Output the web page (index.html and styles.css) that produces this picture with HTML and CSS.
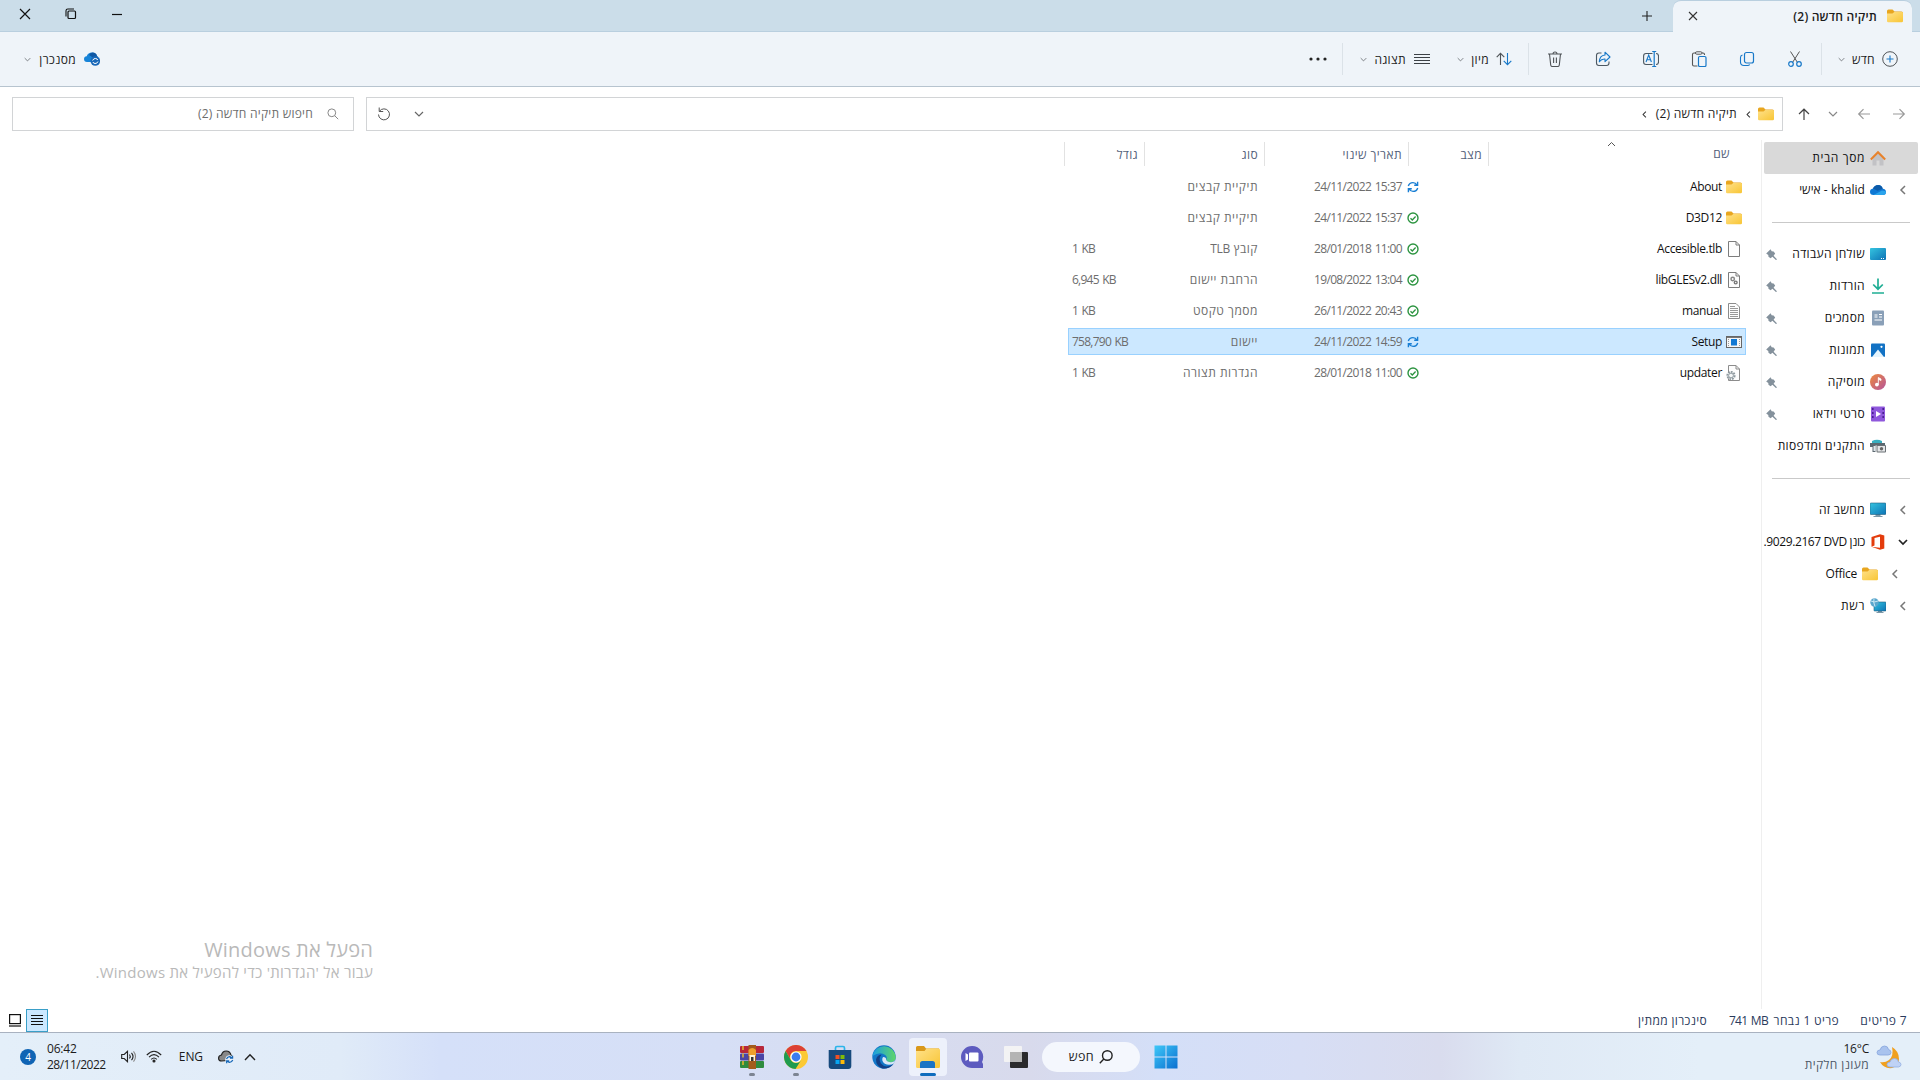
FILE: index.html
```html
<!DOCTYPE html>
<html lang="he" dir="rtl">
<head>
    <meta charset="UTF-8">
    <title>תיקיה חדשה (2)</title>
    <link rel="stylesheet" href="styles.css">
</head>
<body>

<!-- shared icons -->
<svg class="defs" width="0" height="0">
    <defs>
        <linearGradient id="gFolder" x1="0" y1="0" x2="1" y2="1">
            <stop offset="0" stop-color="#ffe18a"/><stop offset="1" stop-color="#f8c534"/>
        </linearGradient>
        <linearGradient id="gScreen" x1="0" y1="0" x2="1" y2="1">
            <stop offset="0" stop-color="#35c4e0"/><stop offset="1" stop-color="#0d73b5"/>
        </linearGradient>
        <linearGradient id="gMusic" x1="0" y1="0" x2="1" y2="1">
            <stop offset="0" stop-color="#ee8a3c"/><stop offset="1" stop-color="#b4549c"/>
        </linearGradient>
        <linearGradient id="gWin" x1="0" y1="0" x2="1" y2="1">
            <stop offset="0" stop-color="#3fc8f8"/><stop offset="1" stop-color="#0a6fd0"/>
        </linearGradient>
        <linearGradient id="gEdge" x1="0" y1="0" x2="1" y2="0">
            <stop offset="0" stop-color="#1b9de2"/><stop offset="1" stop-color="#5fd668"/>
        </linearGradient>
    </defs>
    <symbol id="folder" viewBox="0 0 16 14">
        <path d="M0 2Q0 .5 1.5 .5h4L7.500 2.500H14.500Q16 2.500 16 4V6H0z" fill="#e8a620"/>
        <path d="M0 4.500h5.500L7.300 3H15q1 0 1 1v8q0 1.300-1.300 1.300H1.300Q0 13.300 0 12z" fill="url(#gFolder)"/>
    </symbol>
    <symbol id="pin" viewBox="0 0 12 12">
        <path d="M5 .3L.2 5l2.300 1.500L2.700 8.500l2.300 1.500L7 8.500l4 3.700.9-.9L8.300 7.300l1.700-2.300L8.300 2.700 6.200 2.500z" fill="#84919c"/>
    </symbol>
    <symbol id="chevDown" viewBox="0 0 10 10">
        <path d="M1 3l4 4 4-4" fill="none" stroke="currentColor" stroke-width="1.200"/>
    </symbol>
    <symbol id="chevLeft" viewBox="0 0 10 10">
        <path d="M7 1L3 5l4 4" fill="none" stroke="currentColor" stroke-width="1.500"/>
    </symbol>
    <symbol id="ok" viewBox="0 0 12 12">
        <circle cx="6" cy="6" r="5" fill="none" stroke="#2c9440" stroke-width="1.400"/>
        <path d="M3.500 6.200l1.800 1.800 3.300-3.500" fill="none" stroke="#2c9440" stroke-width="1.300"/>
    </symbol>
    <symbol id="sync" viewBox="0 0 12 12">
        <path d="M1.300 5Q2.300 1.600 6 1.600q2.500 0 4 2.400M10.700 7Q9.700 10.400 6 10.400 3.500 10.400 2 8M10.600 .8V4.300H7.200M1.400 11.200V7.700H4.800" fill="none" stroke="#1a7fd4" stroke-width="1.400"/>
    </symbol>
    <symbol id="page" viewBox="0 0 14 16">
        <path d="M1.500 .5h7.500l3.500 3.500v11.500h-11z" fill="#fdfdfd" stroke="#7c7c7c"/>
        <path d="M9 .5V4h3.500" fill="none" stroke="#7c7c7c"/>
    </symbol>
    <symbol id="monitor" viewBox="0 0 16 16">
        <path d="M5.500 12h5v2h2v1h-9v-1h2z" fill="#7c98a8"/>
        <rect x="0" y="1" width="16" height="11.500" rx="1" fill="url(#gScreen)" stroke="#23607f" stroke-width=".6"/>
    </symbol>
</svg>

<header class="titlebar">
    <div class="tab">
        <svg class="tab-folder" width="16" height="14"><use href="#folder"/></svg>
        <span class="tab-title">תיקיה חדשה (2)</span>
        <svg class="tab-close" width="10" height="10" viewBox="0 0 10 10"><path d="M1 1l8 8M9 1L1 9" stroke="#333" stroke-width="1.100"/></svg>
    </div>
    <svg class="tab-new" width="12" height="12" viewBox="0 0 12 12"><path d="M6 1v10M1 6h10" stroke="#222" stroke-width="1.100"/></svg>
    <div class="win-controls">
        <svg width="12" height="12" viewBox="0 0 12 12"><path d="M1 6.500h10" stroke="#111" stroke-width="1.200"/></svg>
        <svg width="12" height="12" viewBox="0 0 12 12"><rect x="3" y="3" width="7.500" height="7.500" rx="1" fill="none" stroke="#111" stroke-width="1.200"/><path d="M1 8.500V2.800Q1 1 2.800 1H9" fill="none" stroke="#111" stroke-width="1.100"/></svg>
        <svg width="12" height="12" viewBox="0 0 12 12"><path d="M1 1l10 10M11 1L1 11" stroke="#111" stroke-width="1.200"/></svg>
    </div>
</header>

<div class="toolbar">
    <div class="cmd cmd-new">
        <svg width="16" height="16" viewBox="0 0 16 16" fill="none"><circle cx="8" cy="8" r="7.300" stroke="#505458"/><path d="M8 4.500v7M4.500 8h7" stroke="#1878c8" stroke-width="1.100"/></svg>
        <span>חדש</span>
        <svg class="caret" width="7" height="7"><use href="#chevDown"/></svg>
    </div>
    <i class="sep"></i>
    <div class="icon-cmds">
        <svg viewBox="0 0 16 16" fill="none"><path d="M3.500 .5l7 11M12.500 .5l-7 11" stroke="#555"/><circle cx="4" cy="13" r="2.300" stroke="#1878c8" stroke-width="1.200"/><circle cx="12" cy="13" r="2.300" stroke="#1878c8" stroke-width="1.200"/></svg>
        <svg viewBox="0 0 16 16" fill="none"><rect x="5.500" y="1.500" width="9" height="10.500" rx="2" stroke="#1878c8" stroke-width="1.200"/><path d="M3.500 4Q1.500 4.500 1.500 6.500v4.500q0 3.500 3.500 3.500h3.500q1.600 0 2.200-1" stroke="#1878c8" stroke-width="1.100"/></svg>
        <svg viewBox="0 0 16 16" fill="none"><path d="M5 2H3Q1.500 2 1.500 3.500v10Q1.500 15 3 15h3.500M11 2h1q1.500 0 1.500 1.500V4" stroke="#555" stroke-width="1.100"/><rect x="4.500" y=".8" width="6.500" height="2.400" rx="1.200" stroke="#555"/><rect x="7.500" y="5.500" width="7.500" height="10" rx="1.300" stroke="#1878c8" stroke-width="1.200"/></svg>
        <svg viewBox="0 0 16 16" fill="none"><path d="M9.500 2.500h-6.500Q.6 2.500 .6 5v6q0 2.500 2.400 2.500h6.500M13 2.500q2.500 0 2.500 2.500v6q0 2.500-2.500 2.500" stroke="#4c5862" stroke-width="1.100"/><path d="M9.200 .5h4M9.200 15.500h4M11.200 .5v15" stroke="#1878c8" stroke-width="1.200"/><path d="M3 11l2.700-7 2.700 7M4 8.800h3.400" stroke="#1878c8" stroke-width="1.100"/></svg>
        <svg viewBox="0 0 16 16" fill="none"><path d="M6.500 2H4Q1.500 2 1.500 4.500v7.500q0 2.500 2.500 2.500h7.500q2.500 0 2.500-2.500v-1.500" stroke="#4c5862" stroke-width="1.100"/><path d="M10 1.200l5 4.800-5 4.600V8Q6.500 7.700 4.300 10.800 4.600 4.500 10 4z" stroke="#1878c8" stroke-width="1.100" stroke-linejoin="round"/></svg>
        <svg viewBox="0 0 16 16" fill="none"><path d="M1 3h14M6 3Q6 1 8 1t2 2M2.500 3l1.200 11q.1 1.500 1.600 1.500h5.400q1.500 0 1.600-1.500L13.500 3M6.600 6.500v5.500M9.400 6.500v5.500" stroke="#505458" stroke-width="1.100"/></svg>
    </div>
    <i class="sep"></i>
    <div class="cmd cmd-sort">
        <svg width="16" height="14" viewBox="0 0 16 14" fill="none"><path d="M4.500 13V1.500M.7 5.200L4.500 1.300l3.800 3.900" stroke="#505458" stroke-width="1.100"/><path d="M11.500 1v11.500M7.700 8.800l3.800 3.900 3.800-3.900" stroke="#1878c8" stroke-width="1.100"/></svg>
        <span>מיון</span>
        <svg class="caret" width="7" height="7"><use href="#chevDown"/></svg>
    </div>
    <div class="cmd cmd-view">
        <svg width="16" height="12" viewBox="0 0 16 12"><path d="M0 1.500h16M0 4.500h16M0 7.500h16M0 10.500h16" stroke="#3c4146"/></svg>
        <span>תצוגה</span>
        <svg class="caret" width="7" height="7"><use href="#chevDown"/></svg>
    </div>
    <i class="sep"></i>
    <svg class="more" width="18" height="4" viewBox="0 0 18 4"><circle cx="2" cy="2" r="1.600"/><circle cx="9" cy="2" r="1.600"/><circle cx="16" cy="2" r="1.600"/></svg>
    <div class="cmd cmd-sync">
        <svg width="16" height="14" viewBox="0 0 16 14"><path d="M3 10Q0 10 0 7q0-2.500 2.700-2.800Q4 .5 8 .5q4 0 5 3.500l1 4H8v2z" fill="#1784d8"/><path d="M5 3Q6 .5 8.500 .5q4 0 4.500 3.500l1 1H8z" fill="#1058a4"/><circle cx="11.300" cy="9" r="4.800" fill="#1a68b8"/><path d="M8.600 8.500q1-2.300 3-2t2 1.500M14 9.500q-1 2.300-3 2t-2-1.500" fill="none" stroke="#fff"/></svg>
        <span>מסנכרן</span>
        <svg class="caret" width="7" height="7"><use href="#chevDown"/></svg>
    </div>
</div>

<div class="navbar">
    <svg class="dim" width="14" height="12" viewBox="0 0 14 12"><path d="M1 6h11M7.500 1.200L12.300 6l-4.800 4.800"/></svg>
    <svg class="dim nav-back" width="14" height="12" viewBox="0 0 14 12"><path d="M13 6H2M6.500 1.200L1.700 6l4.800 4.800"/></svg>
    <svg class="nav-recent" width="10" height="10" viewBox="0 0 10 10"><path d="M1 3l4 4 4-4"/></svg>
    <svg class="nav-up" width="14" height="12" viewBox="0 0 14 12"><path d="M7 12V1.500M2 6l5-4.800L12 6"/></svg>
    <div class="address">
        <svg width="16" height="14"><use href="#folder"/></svg>
        <svg class="crumb-sep" width="7" height="7"><use href="#chevLeft"/></svg>
        <span class="crumb">תיקיה חדשה (2)</span>
        <svg class="crumb-sep" width="7" height="7"><use href="#chevLeft"/></svg>
        <svg class="address-drop" width="10" height="10"><use href="#chevDown"/></svg>
        <svg width="14" height="14" viewBox="0 0 14 14"><path d="M2.500 4.200A5.500 5.500 0 1 1 1.500 7.500M2.200 .5V4.500H6.200" fill="none" stroke="#555"/></svg>
    </div>
    <div class="search-box">
        <svg width="12" height="12" viewBox="0 0 12 12"><circle cx="4.800" cy="4.800" r="3.900" fill="none" stroke="#888"/><path d="M7.700 7.700l3.500 3.500" stroke="#888"/></svg>
        <span>חיפוש תיקיה חדשה (2)</span>
    </div>
</div>

<main class="content">
    <nav class="sidebar">
        <div class="item current">
            <svg class="icon" viewBox="0 0 16 16"><path d="M2.500 7.500v8h4v-5h3v5h4v-8L8 2.500z" fill="#c2c2c5"/><path d="M.8 9.500L8 2.200l7.200 7.300" fill="none" stroke="#e8822b" stroke-width="2"/></svg>
            <span class="wide">מסך הבית</span>
        </div>
        <div class="item">
            <svg class="expander" width="10" height="10"><use href="#chevLeft"/></svg>
            <svg class="icon" viewBox="0 0 16 16"><path d="M3.500 13Q0 13 0 9.800 0 7 3 6.500 4.500 3 8.200 3q3.500 0 4.500 3.700Q16 7 16 10q0 3-3 3z" fill="#0f78d4"/><path d="M3 6.500Q4.500 3 8.200 3q3.500 0 4.500 3.700L7.500 8.800z" fill="#0c5aa8"/><path d="M3.500 13L12 8.500q3.500 0 4 1.500 0 3-3 3z" fill="#2ba4ec"/></svg>
            <span class="mixed">khalid - אישי</span>
        </div>
        <hr>
        <div class="item">
            <svg class="icon" viewBox="0 0 16 16"><rect y="2" width="16" height="12" rx="1" fill="url(#gScreen)"/><path d="M11 12.500h1M13 12.500h1" stroke="#fff"/></svg>
            <span>שולחן העבודה</span>
            <svg class="pin"><use href="#pin"/></svg>
        </div>
        <div class="item">
            <svg class="icon" viewBox="0 0 16 16"><path d="M8 .5V11M3.200 6.500L8 11.200l4.800-4.700M2 15h12" fill="none" stroke="#1fae94" stroke-width="1.700"/></svg>
            <span>הורדות</span>
            <svg class="pin"><use href="#pin"/></svg>
        </div>
        <div class="item">
            <svg class="icon" viewBox="0 0 16 16"><rect x="2" y=".5" width="12" height="15" rx="1" fill="#8aa0b8"/><path d="M4.500 5h3M4.500 7h3M9 4.500h3M9 7h3M4.500 10h7.500" stroke="#fff" stroke-width="1.200"/></svg>
            <span>מסמכים</span>
            <svg class="pin"><use href="#pin"/></svg>
        </div>
        <div class="item">
            <svg class="icon" viewBox="0 0 16 16"><rect x="1" y="1.500" width="14" height="13.500" rx="1" fill="#1272c4"/><path d="M2 15l6-7.500 6 7.500z" fill="#e6f5fd"/><circle cx="11.500" cy="4.800" r="1.100" fill="#fff"/></svg>
            <span>תמונות</span>
            <svg class="pin"><use href="#pin"/></svg>
        </div>
        <div class="item">
            <svg class="icon" viewBox="0 0 16 16"><circle cx="8" cy="8" r="8" fill="url(#gMusic)"/><path d="M8.300 10.500V3.500l2.700 1.500v1.500L8.800 5.500" fill="#fff" stroke="#fff" stroke-width=".8"/><circle cx="6.900" cy="10.600" r="1.900" fill="#fff"/></svg>
            <span>מוסיקה</span>
            <svg class="pin"><use href="#pin"/></svg>
        </div>
        <div class="item">
            <svg class="icon" viewBox="0 0 16 16"><rect x="1" y=".5" width="14" height="15" rx="1" fill="#8f58dc"/><path d="M2.800 2v12M13.200 2v12" stroke="#4b1f93" stroke-width="1.600" stroke-dasharray="2 2"/><path d="M6 5l5 3-5 3z" fill="#fff"/></svg>
            <span>סרטי וידאו</span>
            <svg class="pin"><use href="#pin"/></svg>
        </div>
        <div class="item">
            <svg class="icon" viewBox="0 0 16 16"><path d="M2 3q5-2.500 10 0v2.500H2z" fill="#37aebf"/><path d="M0 5h15v2.500H5.500V14H2.500V9H0z" fill="#5c6870"/><path d="M3.500 8h2v5h-2z" fill="#dfe6ea"/><rect x="6.500" y="7" width="9.500" height="7.500" rx="1" fill="#6a7075"/><rect x="7.500" y="8" width="7.500" height="5.500" fill="#e4e6e8"/><circle cx="11.500" cy="10.800" r="1.700" fill="#666"/></svg>
            <span>התקנים ומדפסות</span>
        </div>
        <hr>
        <div class="item">
            <svg class="expander" width="10" height="10"><use href="#chevLeft"/></svg>
            <svg class="icon"><use href="#monitor"/></svg>
            <span>מחשב זה</span>
        </div>
        <div class="item">
            <svg class="expander open" width="10" height="10" viewBox="0 0 10 10"><path d="M1 3l4 4 4-4" fill="none" stroke="currentColor" stroke-width="1.700"/></svg>
            <svg class="icon" viewBox="0 0 16 16"><path d="M1.500 3L10 .2l4.300 1.300v13L10 15.800 1.500 12.800 10 13.700V2.800L4.500 4v7.500l-3 1.300z" fill="#e43c0c"/></svg>
            <span class="drive">כונן DVD ‏9029.2167.</span>
        </div>
        <div class="item nested">
            <svg class="expander" width="10" height="10"><use href="#chevLeft"/></svg>
            <svg class="icon"><use href="#folder"/></svg>
            <span class="latin">Office</span>
        </div>
        <div class="item">
            <svg class="expander" width="10" height="10"><use href="#chevLeft"/></svg>
            <svg class="icon" viewBox="0 0 16 16"><path d="M8 12h4v2h1.500v1h-7v-1H8z" fill="#7c98a8"/><rect x="4" y="4" width="12" height="9" rx=".6" fill="url(#gScreen)" stroke="#23607f" stroke-width=".6"/><circle cx="4.500" cy="4.500" r="4.200" fill="#5aa6cc"/><path d="M1 3q3 2 7 0M4 .5q-1 4 1 8" fill="none" stroke="#d6eef7" stroke-width=".9"/></svg>
            <span class="wide">רשת</span>
        </div>
    </nav>

    <section class="files">
        <div class="row head">
            <div class="c-name">שם<svg class="sort-mark" width="9" height="6" viewBox="0 0 9 6"><path d="M1 5l3.500-3.500L8 5" fill="none" stroke="#555"/></svg></div>
            <div class="c-state">מצב</div>
            <div class="c-date">תאריך שינוי</div>
            <div class="c-type">סוג</div>
            <div class="c-size">גודל</div>
        </div>
        <div class="row">
            <div class="c-name"><svg class="icon"><use href="#folder"/></svg><span dir="ltr">About</span></div>
            <div class="c-state"><svg><use href="#sync"/></svg></div>
            <div class="c-date" dir="ltr">24/11/2022 15:37</div>
            <div class="c-type">תיקיית קבצים</div>
            <div class="c-size"></div>
        </div>
        <div class="row">
            <div class="c-name"><svg class="icon"><use href="#folder"/></svg><span dir="ltr">D3D12</span></div>
            <div class="c-state"><svg><use href="#ok"/></svg></div>
            <div class="c-date" dir="ltr">24/11/2022 15:37</div>
            <div class="c-type">תיקיית קבצים</div>
            <div class="c-size"></div>
        </div>
        <div class="row">
            <div class="c-name"><svg class="icon"><use href="#page"/></svg><span dir="ltr">Accesible.tlb</span></div>
            <div class="c-state"><svg><use href="#ok"/></svg></div>
            <div class="c-date" dir="ltr">28/01/2018 11:00</div>
            <div class="c-type">קובץ <span class="latin">TLB</span></div>
            <div class="c-size" dir="ltr">1 KB</div>
        </div>
        <div class="row">
            <div class="c-name"><svg class="icon" viewBox="0 0 16 16"><path d="M2.500 .5H10l3.500 3.500v11.500h-11z" fill="#fdfdfd" stroke="#7c7c7c"/><path d="M10 .5V4h3.500" fill="none" stroke="#7c7c7c"/><circle cx="6.700" cy="7" r="1.700" fill="none" stroke="#888" stroke-width="1.500"/><circle cx="9.700" cy="10.500" r="1.400" fill="none" stroke="#777" stroke-width="1.400"/></svg><span dir="ltr">libGLESv2.dll</span></div>
            <div class="c-state"><svg><use href="#ok"/></svg></div>
            <div class="c-date" dir="ltr">19/08/2022 13:04</div>
            <div class="c-type">הרחבת יישום</div>
            <div class="c-size" dir="ltr">6,945 KB</div>
        </div>
        <div class="row">
            <div class="c-name"><svg class="icon" viewBox="0 0 16 16"><path d="M2.500 .5H10l3.500 3.500v11.500h-11z" fill="#fdfdfd" stroke="#8c8c8c"/><path d="M4 3.500h5M4 5.500h8M4 7.500h8M4 9.500h8M4 11.500h8M4 13.500h8" stroke="#999"/></svg><span dir="ltr">manual</span></div>
            <div class="c-state"><svg><use href="#ok"/></svg></div>
            <div class="c-date" dir="ltr">26/11/2022 20:43</div>
            <div class="c-type">מסמך טקסט</div>
            <div class="c-size" dir="ltr">1 KB</div>
        </div>
        <div class="row selected">
            <div class="c-name"><svg class="icon" viewBox="0 0 16 16"><rect x=".5" y="2.500" width="15" height="11" fill="#f6f6f6" stroke="#666"/><path d="M1 3.500h14" stroke="#777"/><path d="M2.500 5v8M13.500 5v8" stroke="#999" stroke-dasharray="1 1"/><rect x="5" y="5" width="6" height="6.500" fill="#0f78d4"/></svg><span dir="ltr">Setup</span></div>
            <div class="c-state"><svg><use href="#sync"/></svg></div>
            <div class="c-date" dir="ltr">24/11/2022 14:59</div>
            <div class="c-type">יישום</div>
            <div class="c-size" dir="ltr">758,790 KB</div>
        </div>
        <div class="row">
            <div class="c-name"><svg class="icon" viewBox="0 0 16 16"><path d="M2.500 .5H10l3.500 3.500v11.500h-11z" fill="#fdfdfd" stroke="#8c8c8c"/><path d="M10 .5V4h3.500" fill="none" stroke="#8c8c8c"/><circle cx="5" cy="10.500" r="3.700" fill="#f4f6f7" stroke="#8d989e" stroke-width="1.800" stroke-dasharray="1.800 1"/><circle cx="5" cy="10.500" r="2.400" fill="none" stroke="#8d989e"/></svg><span dir="ltr">updater</span></div>
            <div class="c-state"><svg><use href="#ok"/></svg></div>
            <div class="c-date" dir="ltr">28/01/2018 11:00</div>
            <div class="c-type">הגדרות תצורה</div>
            <div class="c-size" dir="ltr">1 KB</div>
        </div>
    </section>

    <div class="watermark">
        <div class="wm-title">הפעל את Windows</div>
        <div class="wm-text">עבור אל 'הגדרות' כדי להפעיל את Windows.</div>
    </div>
</main>

<div class="statusbar">
    <span class="st-count">7 פריטים</span>
    <span class="st-sel">פריט 1 נבחר</span>
    <span class="st-size" dir="ltr">741 MB</span>
    <span class="st-sync">סינכרון ממתין</span>
    <div class="view-modes">
        <div class="mode active"><svg width="12" height="11" viewBox="0 0 12 11"><path d="M0 .5h12M0 3.500h12M0 6.500h12M0 9.500h12" stroke="#111" stroke-width="1.100"/></svg></div>
        <div class="mode"><svg width="12" height="13" viewBox="0 0 12 13"><rect x=".6" y=".6" width="10.800" height="9" fill="none" stroke="#111" stroke-width="1.200"/><path d="M0 12h12" stroke="#111" stroke-width="1.200"/></svg></div>
    </div>
</div>

<footer class="taskbar">
    <div class="weather">
        <svg width="26" height="24" viewBox="0 0 26 24"><path d="M16 2q2 9-3 13-4 3-9 2 4 7 12 6 7-2 7-9 0-8-7-12z" fill="#f0a020"/><path d="M4 10Q1 10 1 7.500T4 5Q5 1 8.500 1T12.500 4.500Q15 5 15 7.500T12 10z" fill="#a9c3ee" stroke="#86a5dd" stroke-width=".8"/><path d="M14 22q-3 0-3-2.500t3-2.500q1-3.500 4.500-3.500t4 3.500q2.500.5 2.500 2.500T22.500 22z" fill="#bfd2f5" stroke="#93aee2" stroke-width=".8"/></svg>
        <div class="weather-text">
            <div class="temp" dir="ltr">16°C</div>
            <div class="desc">מעונן חלקית</div>
        </div>
    </div>

    <div class="apps">
        <div class="app">
            <svg width="24" height="24" viewBox="0 0 24 24" fill="url(#gWin)"><path d="M.5 .5h11v11H.5zM12.500 .5h11v11h-11zM.5 12.500h11v11H.5zM12.500 12.500h11v11h-11z"/></svg>
        </div>
        <div class="task-search">
            <svg width="14" height="14" viewBox="0 0 14 14"><circle cx="8.300" cy="5.500" r="4.800" fill="none" stroke="#222" stroke-width="1.400"/><path d="M4.800 9L.8 13.200" stroke="#222" stroke-width="1.400"/></svg>
            <span>חפש</span>
        </div>
        <div class="app">
            <svg width="24" height="22" viewBox="0 0 24 22"><rect x="6" y="6" width="18" height="16" rx="1" fill="#2a2a2c"/><rect width="18" height="16" rx="1" fill="#f4f4f4" opacity=".95"/><rect x="6" y="6" width="12" height="10" fill="#b4b4b4"/></svg>
        </div>
        <div class="app">
            <svg width="24" height="24" viewBox="0 0 24 24"><path d="M12 1a11 11 0 1 0 0 22h11v-4l-1-2A11 11 0 0 0 12 1z" fill="#5d5bbf"/><rect x="9" y="7.500" width="9.500" height="9" rx="1" fill="#fff"/><path d="M5.500 8l2.500 1.500v5L5.500 16z" fill="#fff"/></svg>
        </div>
        <div class="app focused">
            <svg width="26" height="24" viewBox="0 0 26 24"><path d="M1 2.500Q1 1 2.500 1H9l2 2.500h13V8H1z" fill="#d9981a"/><path d="M1 6h8.500l2-2.500H23.500Q25 3.500 25 5v16.500Q25 23 23.500 23h-21Q1 23 1 21.500z" fill="url(#gFolder)"/><path d="M5 23v-4.500Q5 16 7.500 16h10q2.500 0 2.500 2.500V23z" fill="#1a73c4"/></svg>
        </div>
        <div class="app">
            <svg width="24" height="24" viewBox="0 0 24 24"><circle cx="12" cy="12" r="11.700" fill="#1277c8"/><path d="M.5 11A11.700 11.700 0 0 1 23.700 12q0 5-5 5.200-5 0-4.500-2.700 1.500-2.500-1-4.500Q8 6 .5 11z" fill="url(#gEdge)"/><path d="M9.500 9.500Q6 14 9 18.500q4 5 11 1.500l1.500-1q-4 5-11 4.500Q4 21 4 14.500 5 10 9.500 9.500z" fill="#123f86"/><path d="M14 14.500q1 2.700 5 2.700 2.500 0 4-2l-.7 3q-5 3-9.500.5-4-3-1.800-6.700 3.500 0 3 2.500z" fill="#d8e6f6"/></svg>
        </div>
        <div class="app">
            <svg width="24" height="24" viewBox="0 0 24 24"><path d="M7.500 6V3q0-1.500 1.500-1.500h6q1.500 0 1.500 1.500v3" fill="none" stroke="#2cb5ea" stroke-width="1.700"/><path d="M.7 5h22.600v16q0 3-3 3H3.700q-3 0-3-3z" fill="#174a7d"/><path d="M7.500 10h4v4h-4z" fill="#f05025"/><path d="M12.500 10h4v4h-4z" fill="#80bb06"/><path d="M7.500 15h4v4h-4z" fill="#08a5f0"/><path d="M12.500 15h4v4h-4z" fill="#ffbb08"/></svg>
        </div>
        <div class="app running">
            <svg width="24" height="24" viewBox="0 0 24 24"><circle cx="12" cy="12" r="12" fill="#fcc934"/><path d="M1.600 6A12 12 0 0 1 22.400 6H12a6 6 0 0 0-5.200 9z" fill="#dc4035"/><path d="M1.600 6A12 12 0 0 0 11.500 24L17.200 15A6 6 0 0 1 6.800 15z" fill="#1f9b4f"/><circle cx="12" cy="12" r="5.600" fill="#fff"/><circle cx="12" cy="12" r="4.400" fill="#3b7ded"/></svg>
        </div>
        <div class="app running">
            <svg width="24" height="24" viewBox="0 0 24 24"><rect y="1" width="24" height="7" rx="1" fill="#b8283a"/><rect y="8.500" width="24" height="7" rx="1" fill="#4a45a6"/><rect y="16" width="24" height="7" rx="1" fill="#2e8b3e"/><path d="M3 1v22" stroke="#e8b830" stroke-width="1.500" stroke-dasharray="4 3.500"/><rect x="8.500" y="0" width="7.500" height="24" fill="#a35c1c"/><path d="M8.500 5q3.700-4 7.500 0v6h-7.500z" fill="#f0a02c"/><path d="M9.500 10h5.500v6H9.500z" fill="#fff3d8"/><path d="M11 12h2.500v4H11z" fill="#333"/></svg>
        </div>
    </div>

    <div class="tray">
        <svg class="tray-up" width="12" height="8" viewBox="0 0 12 8"><path d="M1 7l5-5.300L11 7" fill="none" stroke="#222" stroke-width="1.400"/></svg>
        <svg class="tray-cloud" width="16" height="14" viewBox="0 0 16 14"><path d="M3.500 11Q.6 11 .6 8.200T3.500 5Q4.500 1 8.200 1t4.800 4l1.500 2v3z" fill="#888" stroke="#222" stroke-width="1.200"/><circle cx="11.500" cy="9.500" r="4.300" fill="#e9f2fb"/><path d="M8.500 9q1-2.500 3.500-2.300l2 1.300M14.700 10q-1 2.500-3.500 2.300l-2-1.300M14.500 5.800V8.200H12M8.700 13.300V10.900H11.200" fill="none" stroke="#1868b8" stroke-width="1.300"/></svg>
        <span class="lang">ENG</span>
        <svg class="tray-wifi" width="16" height="13" viewBox="0 0 16 13" fill="none" stroke="#222" stroke-width="1.100"><path d="M.8 5Q8-2.500 15.200 5M3 7.200Q8 2.200 13 7.200M5.200 9.400Q8 6.600 10.800 9.400"/><circle cx="8" cy="11" r="1" fill="#222"/></svg>
        <svg class="tray-sound" width="16" height="13" viewBox="0 0 16 13" fill="none" stroke="#222" stroke-width="1.100"><path d="M.7 4.500h2.500L6.500 1.300v10.400L3.200 8.500H.7zM8.500 4.500q1.500 2 0 4M10.500 2.800q3 3.700 0 7.400"/><path d="M12.500 1.300q4 5 0 10.400" stroke="#888"/></svg>
        <div class="clock" dir="ltr">
            <div class="time">06:42</div>
            <div>28/11/2022</div>
        </div>
        <div class="badge">4</div>
    </div>
</footer>

</body>
</html>
```
FILE: styles.css
```css
* {
    box-sizing: border-box;
}
body {
    margin: 0;
    width: 1920px;
    height: 1080px;
    overflow: hidden;
    display: flex;
    flex-direction: column;
    background: #fff;
    color: #1b1b1b;
    font-family: "Open Sans", "Noto Sans", sans-serif;
    font-size: 12px;
    line-height: 16px;
    letter-spacing: 0.35px;
    white-space: nowrap;
}
svg {
    display: block;
    flex: none;
}
.defs {
    position: absolute;
}
.latin {
    letter-spacing: -0.25px;
}

/* title bar */
.titlebar {
    height: 32px;
    padding-right: 8px;
    display: flex;
    align-items: center;
    background: #cbdde9;
    border-bottom: 1px solid #b9cfdf;
}
.tab {
    width: 239px;
    height: 32px;
    padding: 0 9px 0 15px;
    display: flex;
    align-items: center;
    background: #eff4f9;
    border-radius: 8px 8px 0 0;
    border-top: 1px solid #b9cfdf;
}
.tab-title {
    margin-right: 10px;
    padding-top: 2px;
    font-weight: 600;
    letter-spacing: 0.2px;
}
.tab-close {
    margin-right: auto;
}
.tab-new {
    margin-right: 20px;
}
.win-controls {
    margin-right: auto;
    padding: 0 0 3px 19px;
    display: flex;
    gap: 34px;
}

/* command bar */
.toolbar {
    height: 55px;
    padding: 0 22px 0 26px;
    display: flex;
    align-items: center;
    background: #eff4f9;
    border-bottom: 1px solid #b7c4cf;
}
.cmd {
    display: flex;
    align-items: center;
    gap: 8px;
}
.cmd span {
    padding-top: 2px;
}
.caret {
    margin-right: auto;
    color: #6a6e72;
}
.cmd-new {
    width: 60px;
    gap: 7px;
}
.cmd-new + .sep {
    margin-right: 16px;
}
.cmd-sort {
    width: 54px;
    margin-right: 16px;
    gap: 7px;
}
.cmd-view {
    width: 70px;
    margin: 0 28px 0 17px;
}
.cmd-sync {
    width: 74px;
    margin-right: auto;
}
.sep {
    width: 1px;
    height: 32px;
    background: #dbe2e8;
}
.icon-cmds {
    margin: 0 18px;
    display: flex;
    gap: 32px;
}
.icon-cmds svg {
    width: 16px;
    height: 16px;
}
.more {
    margin-right: 15px;
    fill: #222;
}

/* address row */
.navbar {
    height: 53px;
    padding: 1px 14px 0 12px;
    display: flex;
    align-items: center;
}
.navbar > svg {
    fill: none;
    stroke: #444;
    stroke-width: 1.2;
}
.navbar > svg.dim {
    stroke: #999;
}
.nav-back {
    margin-right: 21px;
}
.navbar > svg.nav-recent {
    margin-right: 19px;
    stroke: #888;
}
.nav-up {
    margin: 0 17px 0 14px;
}
.address,
.search-box {
    height: 34px;
    display: flex;
    align-items: center;
    border: 1px solid #d2d4d6;
}
.address {
    width: 1417px;
    padding: 0 8px 0 10px;
}
.crumb-sep {
    margin: 0 6px 0 8px;
    color: #333;
}
.crumb {
    letter-spacing: 0.25px;
}
.crumb + .crumb-sep {
    margin-right: 8px;
}
.address-drop {
    margin: 0 auto 0 23px;
    color: #666;
}
.search-box {
    width: 342px;
    margin-right: 12px;
    padding-right: 14px;
    color: #6c6c6c;
    letter-spacing: 0.25px;
}
.search-box span {
    margin-right: 14px;
}

/* main area */
.content {
    position: relative;
    flex: 1;
    display: flex;
}
.sidebar {
    width: 159px;
    padding: 2px 2px 0 2px;
    border-left: 1px solid #efefef;
}
.item {
    height: 32px;
    padding-right: 32px;
    display: flex;
    align-items: center;
    color: #111;
}
.item .icon {
    width: 16px;
    height: 16px;
}
.item span {
    margin-right: 5px;
}
.item .wide {
    letter-spacing: 0.6px;
}
.item .mixed {
    letter-spacing: 0.05px;
}
.item .drive {
    letter-spacing: -0.4px;
}
.current {
    background: #d9d9d9;
    border-radius: 2px;
}
.expander {
    margin: 0 -22px 0 12px;
    color: #777;
}
.expander.open {
    color: #222;
}
.nested {
    padding-right: 40px;
}
.pin {
    width: 11px;
    height: 11px;
    margin: 0 auto 0 2px;
}
.sidebar hr {
    height: 1px;
    margin: 16px 8px 15px 8px;
    border: 0;
    background: #c9c9c9;
}

.files {
    width: 699px;
}
.row {
    height: 27px;
    margin: 0 15px 4px 6px;
    display: flex;
    align-items: center;
    border: 1px solid transparent;
    color: #6d6d6d;
}
.selected {
    background: #cce8ff;
    border-color: #99d1ff;
}
.head {
    height: 28px;
    margin: 0 15px 5px 0;
    border: 0;
    color: #53617a;
}
.c-name {
    width: 257px;
    padding-right: 3px;
    display: flex;
    align-items: center;
    gap: 4px;
    color: #111;
    letter-spacing: -0.35px;
}
.c-name .icon {
    width: 16px;
    height: 16px;
}
.c-state {
    width: 80px;
    display: flex;
    justify-content: flex-end;
}
.c-state svg {
    width: 12px;
    height: 12px;
    margin-left: -1px;
}
.c-date {
    width: 144px;
    padding-right: 6px;
    text-align: right;
    letter-spacing: -0.65px;
    word-spacing: 1px;
}
.c-type {
    width: 120px;
    padding-right: 6px;
    letter-spacing: 0.5px;
}
.c-size {
    width: 75px;
    padding-left: 3px;
    text-align: left;
    letter-spacing: -0.75px;
    word-spacing: 1px;
}
.head > div {
    height: 24px;
    padding-right: 6px;
    line-height: 26px;
    letter-spacing: 0.4px;
    word-spacing: 0;
    border-left: 1px solid #e2e2e2;
}
.head .c-name {
    width: 258px;
    padding-right: 16px;
    position: relative;
    color: #53617a;
}
.head .c-state {
    justify-content: flex-start;
}
.head .c-size {
    width: 80px;
    text-align: right;
}
.sort-mark {
    position: absolute;
    left: 118px;
    top: -1px;
}

.watermark {
    position: absolute;
    left: 96px;
    top: 796px;
    width: 277px;
    color: #b9b9b9;
    letter-spacing: 0.2px;
}
.wm-title {
    font-size: 20px;
    line-height: 27px;
}
.wm-text {
    font-size: 15px;
    line-height: 19px;
    letter-spacing: 0.25px;
}

/* status bar */
.statusbar {
    height: 23px;
    padding: 0 13px 0 4px;
    display: flex;
    align-items: center;
    color: #2a3a5c;
}
.st-count {
    width: 68px;
}
.st-sel {
    width: 71px;
}
.st-size {
    width: 61px;
    text-align: right;
    letter-spacing: -0.7px;
    word-spacing: 1px;
}
.view-modes {
    margin-right: auto;
    display: flex;
}
.mode {
    width: 22px;
    height: 23px;
    display: flex;
    align-items: center;
    justify-content: center;
}
.mode.active {
    background: #cce8ff;
    border: 1px solid #3a9fc8;
}

/* taskbar */
.taskbar {
    height: 48px;
    padding: 0 22px 0 20px;
    display: grid;
    grid-template-columns: 1fr auto 1fr;
    align-items: center;
    border-top: 1px solid #a9b2c0;
    background: linear-gradient(to right, #e4eff9 0, #e0ebf8 340px, #d5e0f9 440px, #d6dff6 720px, #d7dcf0 900px, #d8daec 1030px, #d4dff8 1160px, #d7def5 1300px, #d9dcee 1440px, #dfe9f5 1520px, #e4eff9 1700px);
}
.weather {
    margin-right: -4px;
    display: flex;
    align-items: center;
    gap: 7px;
}
.temp {
    text-align: right;
    letter-spacing: -0.2px;
}
.desc {
    color: #4f5a68;
    letter-spacing: 0.4px;
}
.apps {
    display: flex;
    align-items: center;
}
.app {
    position: relative;
    width: 44px;
    height: 47px;
    display: flex;
    align-items: center;
    justify-content: center;
}
.focused {
    width: 38px;
    height: 38px;
    margin: 0 3px;
    background: #edf1fb;
    border-radius: 4px;
}
.running::after,
.focused::after {
    content: "";
    position: absolute;
    bottom: 4px;
    width: 6px;
    height: 3px;
    border-radius: 2px;
    background: #7c8492;
}
.focused::after {
    bottom: 0;
    width: 16px;
    background: #0f6cbd;
}
.task-search {
    width: 98px;
    height: 30px;
    margin: 0 4px;
    padding-right: 27px;
    display: flex;
    align-items: center;
    gap: 5px;
    border-radius: 15px;
    background: #f4f7fd;
    font-size: 12.5px;
}
.tray {
    display: flex;
    align-items: center;
    justify-content: flex-end;
}
.tray-cloud {
    margin-right: 10px;
}
.lang {
    width: 23px;
    margin: 0 15px 0 18px;
    letter-spacing: -0.1px;
}
.tray-sound {
    margin: 0 9px 0 16px;
}
.clock {
    width: 58px;
    letter-spacing: -0.5px;
}
.time {
    letter-spacing: -0.2px;
}
.badge {
    width: 16px;
    height: 16px;
    margin-right: 11px;
    border-radius: 50%;
    background: #0f64b4;
    color: #fff;
    font-size: 10px;
    letter-spacing: 0;
    text-align: center;
}
```
